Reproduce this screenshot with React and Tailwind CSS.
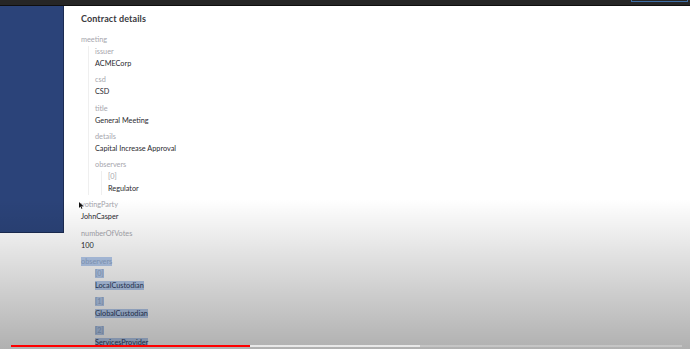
import React from "react";

const font = { fontFamily: "Lato, 'Noto Sans', sans-serif" };

function Label({ children, sel }) {
  return (
    <div className="h-[12px] leading-[12px] text-[7.3px] text-[#a6a6ad]">
      <span className={sel ? "bg-[#b7cdef] text-[#8ea6c8]" : ""}>{children}</span>
    </div>
  );
}

function Value({ children, sel }) {
  return (
    <div className="h-[12px] leading-[12px] text-[7.3px] text-[#2a2a30]">
      <span className={sel ? "bg-[#b7cdef] text-[#2b3b5c]" : ""}>{children}</span>
    </div>
  );
}

function Field({ label, value, sel, last }) {
  return (
    <div className={last ? "" : "mb-[4.3px]"}>
      <Label sel={sel}>{label}</Label>
      <Value sel={sel}>{value}</Value>
    </div>
  );
}

export default function App() {
  return (
    <div className="relative w-[690px] h-[349px] overflow-hidden bg-white" style={font}>
      <div className="flex h-[6px] justify-end bg-[#262626] border-b border-[#0f0f0f]">
        <div className="w-[57px] h-[2px] mr-[2px] border-x border-b border-[#3d6ea6]" />
      </div>
      <div className="flex">
        <div className="w-[64px] h-[227px] shrink-0 bg-[#2b4379] border-r border-b border-[#1b2b52]" />
        <div className="flex flex-col pl-[17px] pt-[6px]">
          <div className="h-[14px] leading-[14px] text-[9px] font-bold text-[#3a3a40] tracking-[0.1px] mb-[8px]">
            Contract details
          </div>
          <Label>meeting</Label>
          <div className="ml-[7px] pl-[6px] border-l border-[#efefef] mb-[4.3px]">
            <Field label="issuer" value="ACMECorp" />
            <Field label="csd" value="CSD" />
            <Field label="title" value="General Meeting" />
            <Field label="details" value="Capital Increase Approval" />
            <Label>observers</Label>
            <div className="ml-[6px] pl-[6px] border-l border-[#efefef]">
              <Field label="[0]" value="Regulator" last />
            </div>
          </div>
          <Field label="votingParty" value="JohnCasper" />
          <Field label="numberOfVotes" value="100" />
          <Label sel>observers</Label>
          <div className="ml-[7px] pl-[7px]">
            <Field label="[0]" value="LocalCustodian" sel />
            <Field label="[1]" value="GlobalCustodian" sel />
            <Field label="[2]" value="ServicesProvider" sel />
          </div>
        </div>
      </div>

      {/* player gradient overlay */}
      <div className="pointer-events-none absolute left-0 right-0 bottom-0 h-[150px] bg-gradient-to-b from-[rgba(0,0,0,0)] to-[rgba(0,0,0,0.31)]" />

      {/* cursor */}
      <svg className="absolute left-[79px] top-[202px]" width="5" height="7" viewBox="0 0 5 7">
        <path d="M0 0 L0 6 L1.5 4.6 L2.6 7 L3.4 6.6 L2.4 4.3 L4.4 4.3 Z" fill="#111" />
      </svg>

      {/* progress bar */}
      <div className="absolute left-[11px] w-[671px] top-[345px] h-[2px] flex bg-[rgba(255,255,255,0.25)]">
        <div className="w-[239px] h-full bg-[#ff0000]" />
        <div className="w-[170px] h-full bg-[rgba(255,255,255,0.6)]" />
      </div>
    </div>
  );
}
